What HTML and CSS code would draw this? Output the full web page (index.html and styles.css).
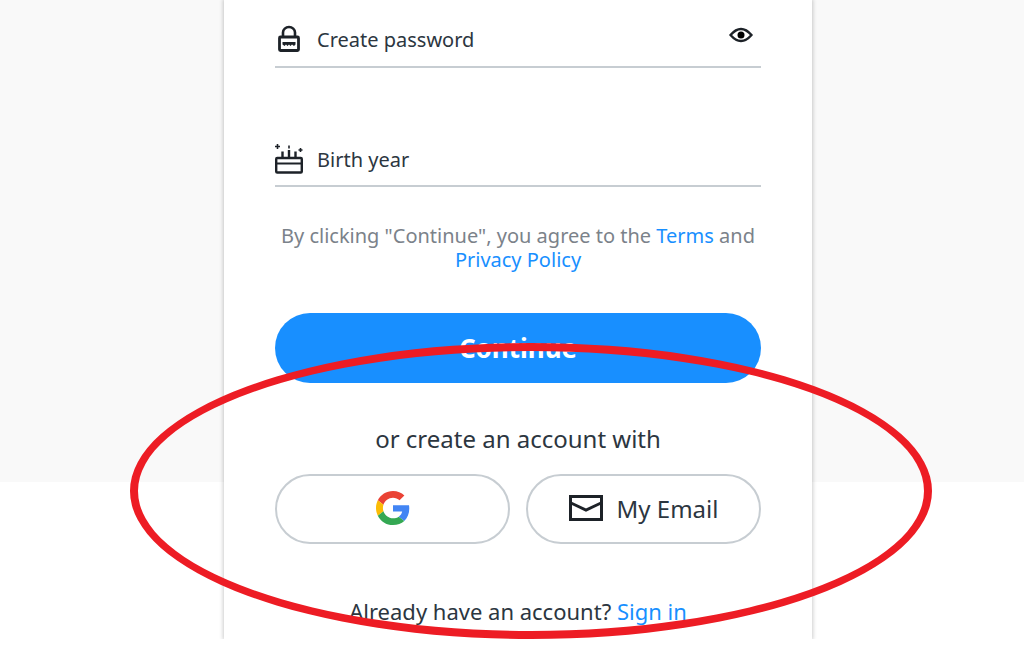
FILE: index.html
```html
<!DOCTYPE html>
<html lang="en">

<head>
  <meta charset="utf-8">
  <meta name="viewport" content="width=device-width, initial-scale=1">
  <title>Create an account</title>
  <link rel="stylesheet" href="styles.css">
</head>

<body>

  <main class="page">
    <form class="card">

      <div class="field">
        <label class="field-icon" for="password" aria-label="Create password">
          <svg width="28" height="30" viewBox="0 0 28 30" fill="none" stroke="#1d2228">
            <path d="M8 13V8.500a6 5.500 0 0 1 12 0V13" stroke-width="2.600"/>
            <rect x="4.500" y="13" width="19" height="13.500" rx="1" stroke-width="2.800"/>
            <path d="M7.500 18h13v2.500l-1.500 1.500-2-1.500-1.500 1.500-1.500-1.500-1.500 1.500-1.500-1.500-1.500 1.500-2-1.500z" fill="#1d2228" stroke="none"/>
          </svg>
        </label>
        <input id="password" type="password" placeholder="Create password">
        <button class="show" type="button" aria-label="Show password">
          <svg width="24" height="16" viewBox="0 0 24 16">
            <path d="M1.500 8Q12-4 22.500 8 12 20 1.500 8z" fill="none" stroke="#1d2228" stroke-width="2.400"/>
            <circle cx="12" cy="8" r="3.500" fill="#000"/>
          </svg>
        </button>
      </div>

      <div class="field">
        <label class="field-icon" for="birth" aria-label="Birth year">
          <svg width="28" height="30" viewBox="0 0 28 30" fill="none" stroke="#1d2228" stroke-width="2.400">
            <rect x="1.200" y="14" width="25.600" height="14.500" rx="1"/>
            <path d="M1 19.500h26" stroke-width="2"/>
            <path d="M7.500 7.500v6.500M14 6v8M20.500 7.500v6.500"/>
            <path d="M14 1.500v3M2.500 0v5M0 2.500h5M25.500 4v4M23.500 6h4" stroke-width="1.600"/>
          </svg>
        </label>
        <input id="birth" type="text" inputmode="numeric" placeholder="Birth year">
      </div>

      <p class="terms">By clicking "Continue", you agree to the <a href="#terms">Terms</a> and <a href="#privacy">Privacy Policy</a></p>

      <button class="continue" type="submit">Continue</button>

      <p class="or">or create an account with</p>

      <div class="providers">
        <button type="button" aria-label="Google">
          <svg width="34" height="34" viewBox="0 0 48 48">
            <path fill="#ea4335" d="M24 9.500c3.540 0 6.710 1.220 9.210 3.600l6.850-6.850C35.900 2.380 30.470 0 24 0 14.620 0 6.510 5.380 2.560 13.220l7.980 6.190C12.430 13.720 17.740 9.500 24 9.500z"/>
            <path fill="#4285f4" d="M46.980 24.550c0-1.570-.15-3.090-.38-4.550H24v9.020h12.940c-.58 2.960-2.260 5.480-4.780 7.180l7.730 6c4.510-4.180 7.090-10.360 7.090-17.650z"/>
            <path fill="#fbbc05" d="M10.530 28.590c-.48-1.450-.76-2.990-.76-4.590s.27-3.140.76-4.590l-7.980-6.190C.92 16.460 0 20.120 0 24s.92 7.540 2.560 10.780l7.970-6.190z"/>
            <path fill="#34a853" d="M24 48c6.480 0 11.930-2.130 15.890-5.810l-7.730-6c-2.150 1.450-4.920 2.300-8.160 2.300-6.260 0-11.570-4.220-13.470-9.910l-7.980 6.190C6.510 42.620 14.620 48 24 48z"/>
          </svg>
        </button>
        <button type="button">
          <svg width="34" height="26" viewBox="0 0 34 26" fill="none" stroke="#1d2228" stroke-width="3">
            <rect x="1.500" y="1.500" width="31" height="23"/>
            <path d="M2 8l15 7 15-7"/>
          </svg>
          My Email
        </button>
      </div>

      <p class="signin">Already have an account? <a href="#signin">Sign in</a></p>

      <div class="marker"></div>
    </form>
  </main>

</body>

</html>
```
FILE: styles.css
```css
* {
  box-sizing: border-box;
}

body {
  margin: 0;
  background: linear-gradient(#f9f9f9 482px, #fff 482px) no-repeat;
  color: #2c363f;
  font-family: "Noto Sans", "Open Sans", sans-serif;
  font-size: 20px;
}

p {
  margin: 0;
  text-align: center;
}

a {
  color: #188fff;
  text-decoration: none;
}

button {
  font: inherit;
  cursor: pointer;
}

svg {
  display: block;
}

.page {
  padding-left: 12px;
  overflow: hidden;
}

.card {
  position: relative;
  max-width: 588px;
  margin: 0 auto;
  padding: 12px 51px;
  background: #fff;
  box-shadow: 0 0 4px 1px rgba(0, 0, 0, .2);
}

.field {
  display: flex;
  align-items: center;
  height: 56px;
  border-bottom: 2px solid #c7cdd2;
}

.field + .field {
  margin-top: 63px;
  padding-top: 2px;
}

.field-icon {
  margin-right: 14px;
}

.field input {
  flex: 1;
  min-width: 0;
  padding: 0;
  border: 0;
  outline: 0;
  background: none;
  color: inherit;
  font: inherit;
}

.field input::placeholder {
  color: #2c363f;
  opacity: 1;
}

.show {
  padding: 0 8px 8px;
  border: 0;
  background: none;
}

.terms {
  margin-top: 37px;
  color: #7b828a;
  line-height: 24px;
}

.terms a {
  display: inline-block;
}

.continue {
  display: block;
  width: 100%;
  height: 70px;
  margin-top: 41px;
  border: 0;
  border-radius: 35px;
  background: #188fff;
  color: #fff;
  font-size: 26px;
  font-weight: bold;
}

.or {
  margin-top: 40px;
  font-size: 24px;
  line-height: 32px;
}

.providers {
  display: flex;
  gap: 16px;
  margin-top: 19px;
}

.providers button {
  display: flex;
  flex: 1;
  align-items: center;
  justify-content: center;
  gap: 14px;
  height: 70px;
  padding: 0 0 2px;
  border: 2px solid #c7cdd2;
  border-radius: 35px;
  background: #fff;
  color: #2c363f;
  font-size: 24px;
}

.signin {
  margin-top: 51px;
  font-size: 22px;
  line-height: 32px;
}

/* red ring around the other sign-up options */
.marker {
  position: absolute;
  right: -120px;
  bottom: 0;
  left: -94px;
  height: 296px;
  border: 8px solid #ed1c24;
  border-radius: 50%;
  pointer-events: none;
}
```
